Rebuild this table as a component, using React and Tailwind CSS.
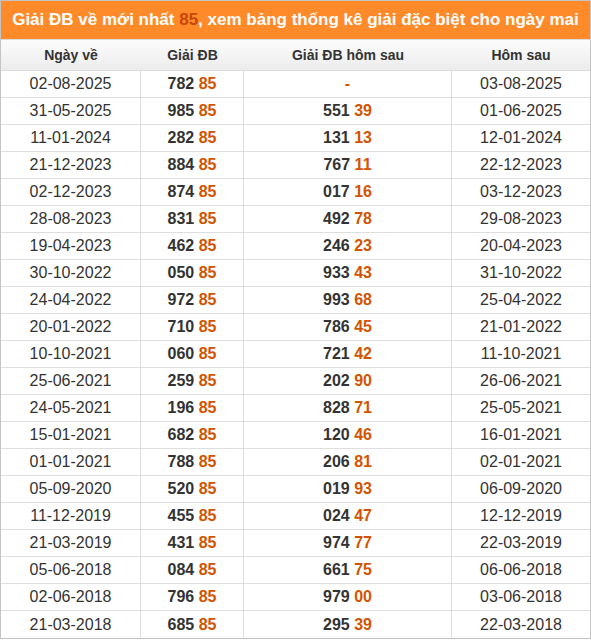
const rows = [
  ["02-08-2025", "782", "85", null, null, "03-08-2025"],
  ["31-05-2025", "985", "85", "551", "39", "01-06-2025"],
  ["11-01-2024", "282", "85", "131", "13", "12-01-2024"],
  ["21-12-2023", "884", "85", "767", "11", "22-12-2023"],
  ["02-12-2023", "874", "85", "017", "16", "03-12-2023"],
  ["28-08-2023", "831", "85", "492", "78", "29-08-2023"],
  ["19-04-2023", "462", "85", "246", "23", "20-04-2023"],
  ["30-10-2022", "050", "85", "933", "43", "31-10-2022"],
  ["24-04-2022", "972", "85", "993", "68", "25-04-2022"],
  ["20-01-2022", "710", "85", "786", "45", "21-01-2022"],
  ["10-10-2021", "060", "85", "721", "42", "11-10-2021"],
  ["25-06-2021", "259", "85", "202", "90", "26-06-2021"],
  ["24-05-2021", "196", "85", "828", "71", "25-05-2021"],
  ["15-01-2021", "682", "85", "120", "46", "16-01-2021"],
  ["01-01-2021", "788", "85", "206", "81", "02-01-2021"],
  ["05-09-2020", "520", "85", "019", "93", "06-09-2020"],
  ["11-12-2019", "455", "85", "024", "47", "12-12-2019"],
  ["21-03-2019", "431", "85", "974", "77", "22-03-2019"],
  ["05-06-2018", "084", "85", "661", "75", "06-06-2018"],
  ["02-06-2018", "796", "85", "979", "00", "03-06-2018"],
  ["21-03-2018", "685", "85", "295", "39", "22-03-2018"],
];

const cols = "grid grid-cols-[140px_103px_208px_1fr]";

function Num({ head, tail }) {
  if (!head) return <span className="font-bold text-[#d35400]">-</span>;
  return (
    <span className="font-bold">
      <span className="text-[#333]">{head}</span>{" "}
      <span className="text-[#d35400]">{tail}</span>
    </span>
  );
}

export default function App() {
  return (
    <div
      className="w-[591px] bg-white border border-[#c4c4c4] text-[#333]"
      style={{ fontFamily: '"Liberation Sans", Arial, sans-serif' }}
    >
      {/* title */}
      <div className="h-[38px] bg-[#fe8a2a] flex items-center justify-center text-white font-bold text-[17px]">
        Giải ĐB về mới nhất&nbsp;<span className="text-[#c8460c]">85</span>, xem bảng thống kê giải đặc biệt cho ngày mai
      </div>

      {/* header */}
      <div className={`${cols} h-[32px] bg-gradient-to-b from-[#fcfcfc] to-[#ececec] border-t border-b border-[#dcdcdc] text-[14px] font-bold`}>
        <div className="flex items-center justify-center">Ngày về</div>
        <div className="flex items-center justify-center">Giải ĐB</div>
        <div className="flex items-center justify-center">Giải ĐB hôm sau</div>
        <div className="flex items-center justify-center">Hôm sau</div>
      </div>

      {rows.map((r, i) => (
        <div key={i} className={`${cols} h-[27px] border-b border-[#dedede] text-[16px] last:border-b-0`}>
          <div className="flex items-center justify-center border-r border-[#dedede]">{r[0]}</div>
          <div className="flex items-center justify-center border-r border-[#dedede]">
            <Num head={r[1]} tail={r[2]} />
          </div>
          <div className="flex items-center justify-center border-r border-[#dedede]">
            <Num head={r[3]} tail={r[4]} />
          </div>
          <div className="flex items-center justify-center">{r[5]}</div>
        </div>
      ))}
    </div>
  );
}
